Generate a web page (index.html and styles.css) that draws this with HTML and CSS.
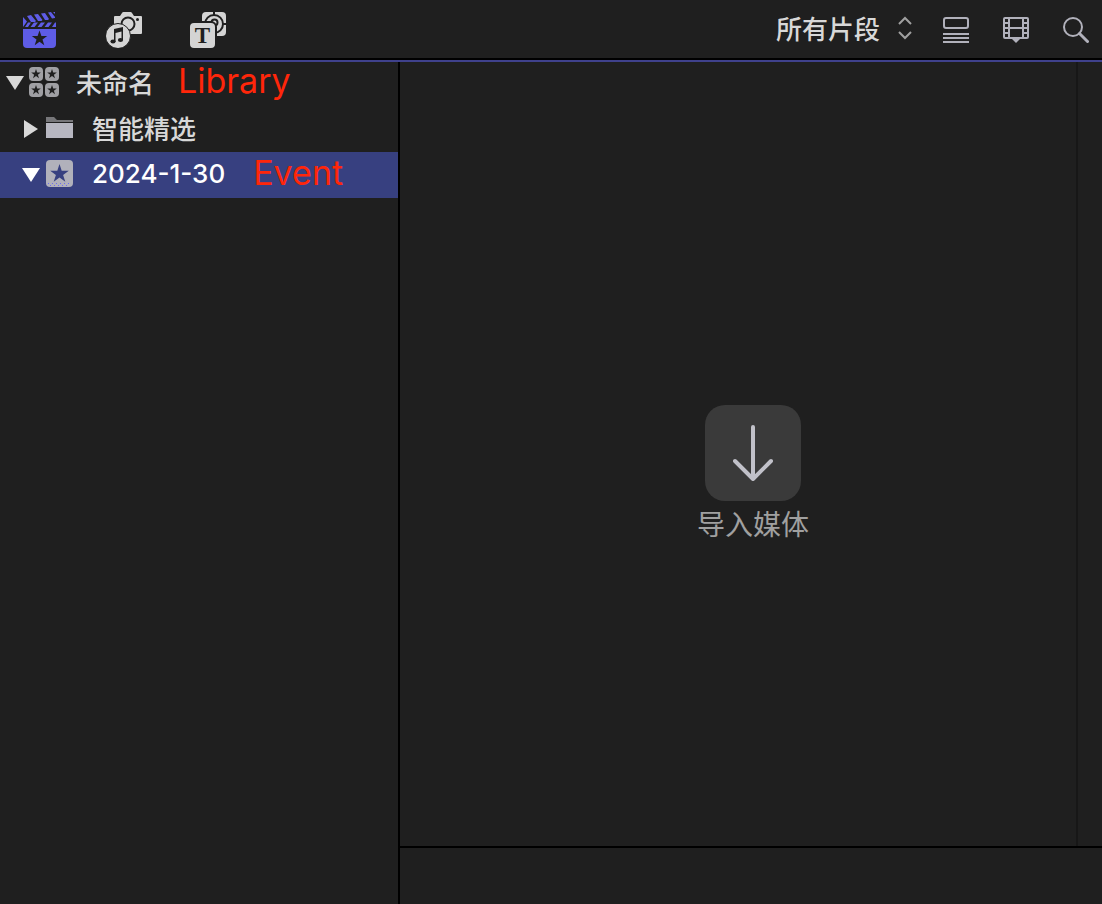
FILE: index.html
```html
<!DOCTYPE html>
<html lang="zh-CN">
<head>
    <meta charset="utf-8">
    <title>未命名</title>
    <link rel="stylesheet" href="styles.css">
</head>
<body>
    <header class="toolbar">
        <div class="tabs">
            <button class="tab active" aria-label="资源库">
                <svg width="36" height="36" viewBox="0 0 36 36">
                    <g fill="currentColor">
                        <path d="M1 5l4 4.500L1 15zM5 4l4-1 5 6-1 1H9zM12 2.500l4-.500 4.500 6-1 1h-3.500zM19 1.500l4-.500 4 6-1 1h-3zM26 .500l3-.500 4 5v1l-3 .500zM31 0h2v2z"/>
                        <path d="M6 10.500l3 0-3 4.500H3zM12 10.500h4L12.500 15h-4zM19 10.500h4L19.500 15h-4zM26 10.500h4L26.500 15h-4zM33 10.500h1V15h-4z"/>
                        <path d="M1 17h33v15a4 4 0 0 1-4 4H5a4 4 0 0 1-4-4z"/>
                    </g>
                    <path fill="#1f1f1f" d="M17.500 18.500l1.900 5.500h5.800l-4.700 3.500 1.800 5.700-4.800-3.500-4.800 3.500 1.800-5.700-4.700-3.500h5.800z"/>
                </svg>
            </button>
            <button class="tab" aria-label="照片和音频">
                <svg width="36" height="36" viewBox="0 0 36 36">
                    <path fill="currentColor" d="M9 4h5l2-3q.500-1 1.500-1h7q1 0 1.500 1l2 3h7a1 1 0 0 1 1 1v16a1 1 0 0 1-1 1H8V5a1 1 0 0 1 1-1z"/>
                    <circle cx="22" cy="12" r="6.500" fill="none" stroke="#1f1f1f" stroke-width="2"/>
                    <circle cx="31.500" cy="7.500" r="1.500" fill="#1f1f1f"/>
                    <circle cx="12" cy="24" r="12.500" fill="currentColor" stroke="#1f1f1f"/>
                    <path fill="#1f1f1f" d="M8 17l9-2v13h-1.500v-8.500L9.500 21v9H8z"/>
                    <ellipse cx="7" cy="29.500" rx="2.600" ry="2" fill="#1f1f1f"/>
                    <ellipse cx="14.500" cy="28" rx="2.600" ry="2" fill="#1f1f1f"/>
                </svg>
            </button>
            <button class="tab" aria-label="字幕和发生器">
                <svg width="36" height="36" viewBox="0 0 36 36">
                    <rect x="12" width="24" height="24" rx="4" fill="currentColor"/>
                    <g fill="none" stroke="#1f1f1f" stroke-width="2">
                        <circle cx="24" cy="12" r="9"/>
                        <circle cx="24.500" cy="10.500" r="3"/>
                        <path d="M24 0v3M33 12h3"/>
                    </g>
                    <rect x="-1" y="10" width="27" height="27" rx="5" fill="currentColor" stroke="#1f1f1f" stroke-width="2"/>
                    <text x="12.500" y="31" class="title-glyph">T</text>
                </svg>
            </button>
        </div>
        <div class="tools">
            <div class="clip-filter">
                <select aria-label="片段过滤">
                    <option>所有片段</option>
                </select>
                <svg width="14" height="24" viewBox="0 0 14 24">
                    <path d="M1 8l6-6 6 6M1 16l6 6 6-6"/>
                </svg>
            </div>
            <button class="tool" aria-label="列表显示">
                <svg width="26" height="26" viewBox="0 0 26 26">
                    <g fill="none" stroke="currentColor" stroke-width="2">
                        <rect x="1" y="1" width="24" height="10" rx="2"/>
                        <path d="M0 17h26M0 21h26M0 25h26"/>
                    </g>
                </svg>
            </button>
            <button class="tool" aria-label="片段外观">
                <svg width="26" height="26" viewBox="0 0 26 26">
                    <g fill="none" stroke="currentColor" stroke-width="2">
                        <rect x="1" y="1" width="24" height="20" rx="1"/>
                        <path d="M6 1v20M20 1v20M6 11h14"/>
                        <path d="M1 6h5M1 11h5M1 16h5M20 6h5M20 11h5M20 16h5"/>
                    </g>
                    <path fill="currentColor" d="M8 21h10l-5 5z"/>
                </svg>
            </button>
            <button class="tool" aria-label="搜索">
                <svg width="26" height="26" viewBox="0 0 26 26">
                    <circle cx="10" cy="10" r="9" fill="none" stroke="currentColor" stroke-width="2"/>
                    <path d="M16.500 16.500l8 8" stroke="currentColor" stroke-width="3" stroke-linecap="round"/>
                </svg>
            </button>
        </div>
    </header>

    <main class="workspace">
        <nav class="sidebar">
            <ul class="tree">
                <li class="row library">
                    <svg class="arrow" width="18" height="16" viewBox="0 0 18 16"><path d="M0 1h18L9 15z"/></svg>
                    <svg class="icon" width="30" height="30" viewBox="0 0 30 30">
                        <defs>
                            <path id="star" d="M0-5l1.200 3.500h3.600l-2.900 2.200 1.100 3.500L0 2.100l-3 2.100 1.100-3.500-2.900-2.200h3.600z"/>
                        </defs>
                        <g fill="#a0a0a4">
                            <rect width="14" height="14" rx="4"/>
                            <rect x="16" width="14" height="14" rx="4"/>
                            <rect y="16" width="14" height="14" rx="4"/>
                            <rect x="16" y="16" width="14" height="14" rx="4"/>
                        </g>
                        <g fill="#1f1f1f">
                            <use href="#star" x="7" y="7"/>
                            <use href="#star" x="23" y="7"/>
                            <use href="#star" x="7" y="23"/>
                            <use href="#star" x="23" y="23"/>
                        </g>
                    </svg>
                    <span class="name">未命名</span>
                    <span class="note">Library</span>
                </li>
                <li class="row child">
                    <svg class="arrow" width="18" height="18" viewBox="0 0 18 18"><path d="M2 0v18l14-9z"/></svg>
                    <svg class="icon" width="28" height="22" viewBox="0 0 28 22">
                        <path fill="#77777a" d="M0 0h8l3 3h16v2H0z"/>
                        <path fill="#b7b7c1" d="M0 6h27v15H0z"/>
                    </svg>
                    <span class="name">智能精选</span>
                </li>
                <li class="row child selected">
                    <svg class="arrow" width="18" height="16" viewBox="0 0 18 16"><path d="M0 1h18L9 15z"/></svg>
                    <svg class="icon" width="28" height="28" viewBox="0 0 28 28">
                        <rect width="27" height="27" rx="4" fill="#b1b1bb"/>
                        <path fill="#374080" d="M13.500 4l2.200 6.700h7.100l-5.700 4.200 2.200 6.800-5.800-4.200-5.800 4.200 2.200-6.800-5.700-4.200h7.100z"/>
                        <path stroke="#6d6df0" stroke-dasharray="1 3" d="M2 23.500h24M4 25.500h20"/>
                    </svg>
                    <span class="name">2024-1-30</span>
                    <span class="note">Event</span>
                </li>
            </ul>
        </nav>
        <section class="browser">
            <div class="clips">
                <button class="import">
                    <span class="import-icon">
                        <svg width="40" height="56" viewBox="0 0 40 56">
                            <path d="M20 2v51M2 36l18 18 18-18"/>
                        </svg>
                    </span>
                    导入媒体
                </button>
            </div>
            <div class="scroller"></div>
            <footer class="status"></footer>
        </section>
    </main>
</body>
</html>
```
FILE: styles.css
```css
* {
    box-sizing: border-box;
}
body {
    margin: 0;
    height: 100vh;
    display: flex;
    flex-direction: column;
    background-color: #1f1f1f;
    color: #d8d8d8;
    font-family: Inter, "Noto Sans CJK SC", sans-serif;
    font-size: 26px;
}
button,
select {
    padding: 0;
    border: none;
    background: none;
    color: inherit;
    font: inherit;
    cursor: pointer;
}
svg {
    display: block;
    flex-shrink: 0;
}
.toolbar {
    height: 60px;
    flex-shrink: 0;
    display: flex;
    align-items: center;
    justify-content: space-between;
    padding: 2px 13px 0 22px;
    border-bottom: 2px solid #000;
}
.tabs {
    display: flex;
    gap: 48px;
}
.tab {
    color: #d4d4d4;
}
.tab.active {
    color: #5e5ce6;
}
.title-glyph {
    font-family: "Liberation Serif", serif;
    font-size: 23px;
    font-weight: bold;
    text-anchor: middle;
    fill: #1f1f1f;
}
.tools {
    display: flex;
    align-items: center;
    gap: 34px;
}
.tool {
    color: #b1b1bb;
}
.clip-filter {
    position: relative;
    margin-right: -3px;
}
.clip-filter select {
    appearance: none;
    width: 138px;
    height: 40px;
    padding: 0 0 2px 2px;
    font-weight: 500;
}
.clip-filter option {
    background-color: #1f1f1f;
}
.clip-filter svg {
    position: absolute;
    right: 0;
    top: 6px;
    fill: none;
    stroke: #a0a0a0;
    stroke-width: 2;
    pointer-events: none;
}
.workspace {
    flex: 1;
    display: flex;
    border-top: 2px solid #3f418c;
}
.sidebar {
    width: 400px;
    flex-shrink: 0;
    border-right: 2px solid #000;
}
.tree {
    list-style: none;
    margin: -2px 0 0;
    padding: 0;
}
.row {
    height: 46px;
    display: flex;
    align-items: center;
    padding-left: 6px;
    white-space: nowrap;
}
.row.child {
    padding-left: 22px;
}
.row.selected {
    background-color: #374080;
    color: #fff;
}
.arrow {
    fill: currentColor;
}
.icon {
    margin: 0 18px 2px 6px;
}
.library .icon {
    margin-left: 5px;
    margin-right: 17px;
}
.name {
    padding-bottom: 4px;
    font-weight: 500;
}
.note {
    margin-left: 24px;
    padding-bottom: 4px;
    color: #ff260a;
    font-size: 34px;
    line-height: 40px;
}
.selected .note {
    margin-left: 28px;
}
.browser {
    flex: 1;
    display: grid;
    grid-template-columns: 1fr 26px;
    grid-template-rows: 1fr 58px;
}
.clips {
    display: flex;
    align-items: center;
    justify-content: center;
    padding: 42px 0 0 30px;
}
.scroller {
    border-left: 2px solid #171717;
}
.status {
    grid-column: 1 / 3;
    border-top: 2px solid #000;
}
.import {
    display: flex;
    flex-direction: column;
    align-items: center;
    gap: 4px;
    color: #a0a0a0;
    font-size: 28px;
    line-height: 40px;
}
.import-icon {
    width: 96px;
    height: 96px;
    display: flex;
    align-items: center;
    justify-content: center;
    border-radius: 20px;
    background-color: #3a3a3a;
}
.import-icon svg {
    fill: none;
    stroke: #c1c1c9;
    stroke-width: 4;
    stroke-linecap: round;
    stroke-linejoin: round;
}
```
